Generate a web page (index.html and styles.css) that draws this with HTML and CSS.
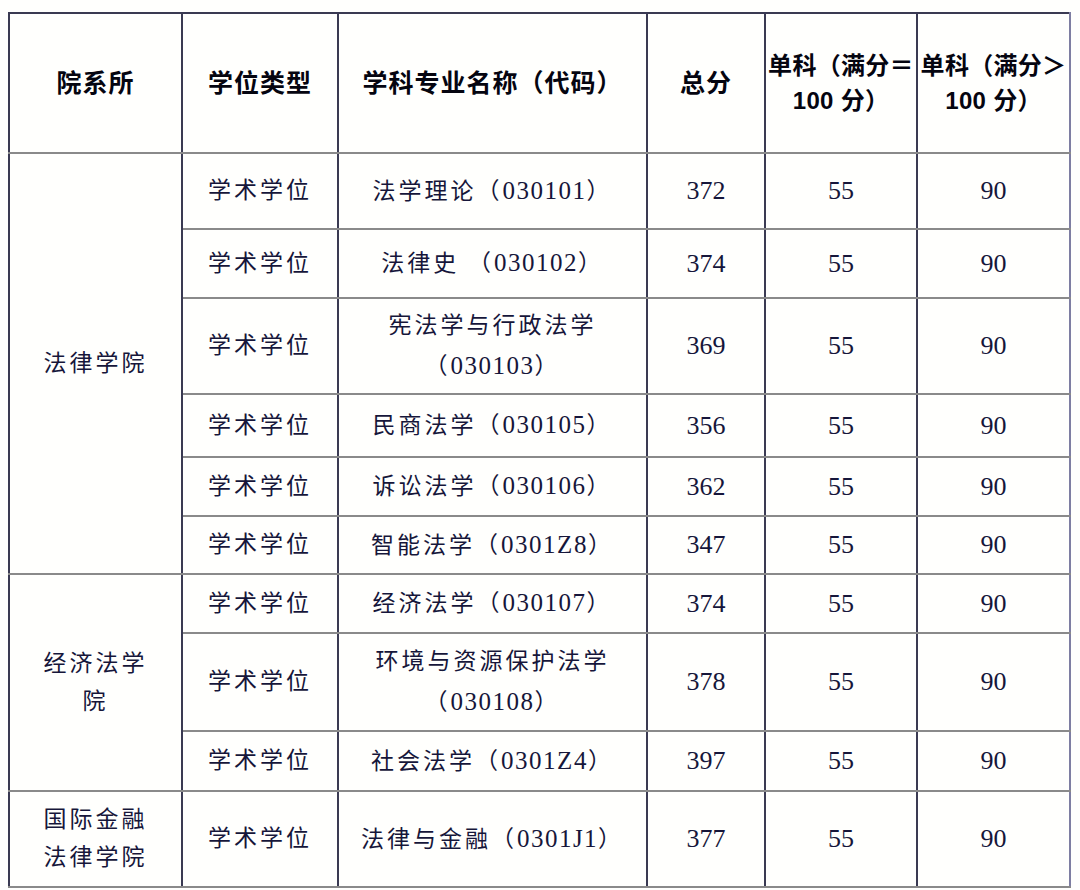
FILE: index.html
```html
<!DOCTYPE html>
<html lang="zh">
<head>
<meta charset="utf-8">
<title>分数线</title>
<link rel="stylesheet" href="styles.css">
</head>
<body>
<table class="score">
  <colgroup>
    <col class="c1"><col class="c2"><col class="c3"><col class="c4"><col class="c5"><col class="c6">
  </colgroup>
  <thead>
    <tr class="h-head">
      <th>院系所</th>
      <th>学位类型</th>
      <th>学科专业名称（代码）</th>
      <th>总分</th>
      <th class="tight">单科（满分＝<br>100 分）</th>
      <th class="tight">单科（满分＞<br>100 分）</th>
    </tr>
  </thead>
  <tbody>
    <tr class="h76">
      <td rowspan="6" class="dept">法律学院</td>
      <td>学术学位</td><td>法学理论（<span class="code">030101</span>）</td><td class="num">372</td><td class="num">55</td><td class="num">90</td>
    </tr>
    <tr class="h69">
      <td>学术学位</td><td>法律史 （<span class="code">030102</span>）</td><td class="num">374</td><td class="num">55</td><td class="num">90</td>
    </tr>
    <tr class="h96">
      <td>学术学位</td><td>宪法学与行政法学<br>（<span class="code">030103</span>）</td><td class="num">369</td><td class="num">55</td><td class="num">90</td>
    </tr>
    <tr class="h63">
      <td>学术学位</td><td>民商法学（<span class="code">030105</span>）</td><td class="num">356</td><td class="num">55</td><td class="num">90</td>
    </tr>
    <tr class="h59">
      <td>学术学位</td><td>诉讼法学（<span class="code">030106</span>）</td><td class="num">362</td><td class="num">55</td><td class="num">90</td>
    </tr>
    <tr class="h58">
      <td>学术学位</td><td>智能法学（<span class="code">0301Z8</span>）</td><td class="num">347</td><td class="num">55</td><td class="num">90</td>
    </tr>
    <tr class="h59">
      <td rowspan="3" class="dept">经济法学<br>院</td>
      <td>学术学位</td><td>经济法学（<span class="code">030107</span>）</td><td class="num">374</td><td class="num">55</td><td class="num">90</td>
    </tr>
    <tr class="h98">
      <td>学术学位</td><td>环境与资源保护法学<br>（<span class="code">030108</span>）</td><td class="num">378</td><td class="num">55</td><td class="num">90</td>
    </tr>
    <tr class="h60">
      <td>学术学位</td><td>社会法学（<span class="code">0301Z4</span>）</td><td class="num">397</td><td class="num">55</td><td class="num">90</td>
    </tr>
    <tr class="h96">
      <td class="dept">国际金融<br>法律学院</td>
      <td>学术学位</td><td>法律与金融（<span class="code">0301J1</span>）</td><td class="num">377</td><td class="num">55</td><td class="num">90</td>
    </tr>
  </tbody>
</table>
</body>
</html>
```

FILE: styles.css
```css
html, body {
  margin: 0;
  padding: 0;
  background: #fffffd;
}

.score {
  margin: 12px 0 0 8px;
  width: 1061px;
  table-layout: fixed;
  border-collapse: collapse;
  font-family: "Liberation Serif", "Noto Sans CJK SC", serif;
  color: #16163a;
}

.c1 { width: 173px; }
.c2 { width: 156px; }
.c3 { width: 309px; }
.c4 { width: 118px; }
.c5 { width: 152px; }
.c6 { width: 153px; }

.score th,
.score td {
  padding: 0;
  text-align: center;
  vertical-align: middle;
  border-left: 2px solid #3a3a52;
  border-right: 2px solid #3a3a52;
  border-top: 2px solid #8a8a8a;
  border-bottom: 2px solid #8a8a8a;
}

.score tr > :last-child {
  border-right-color: #7e7ea2;
}

.score thead th {
  border-top-color: #3a3a52;
}

.score th {
  font-family: "Liberation Sans", "Noto Sans CJK SC", sans-serif;
  font-weight: 700;
  font-size: 25px;
  letter-spacing: 1px;
  line-height: 35px;
  color: #050510;
}

.score th.tight {
  font-size: 24px;
  letter-spacing: 0.3px;
}

.score td {
  font-size: 23px;
  letter-spacing: 3px;
  line-height: 40px;
}

.score td .code {
  font-size: 25px;
  letter-spacing: 1.5px;
}

.score td.num {
  font-size: 26px;
  letter-spacing: 0;
}

.score td.dept {
  line-height: 38px;
}

.h-head { height: 140px; }
.h76 { height: 76px; }
.h69 { height: 69px; }
.h96 { height: 96px; }
.h63 { height: 63px; }
.h59 { height: 59px; }
.h58 { height: 58px; }
.h98 { height: 98px; }
.h60 { height: 60px; }
```
